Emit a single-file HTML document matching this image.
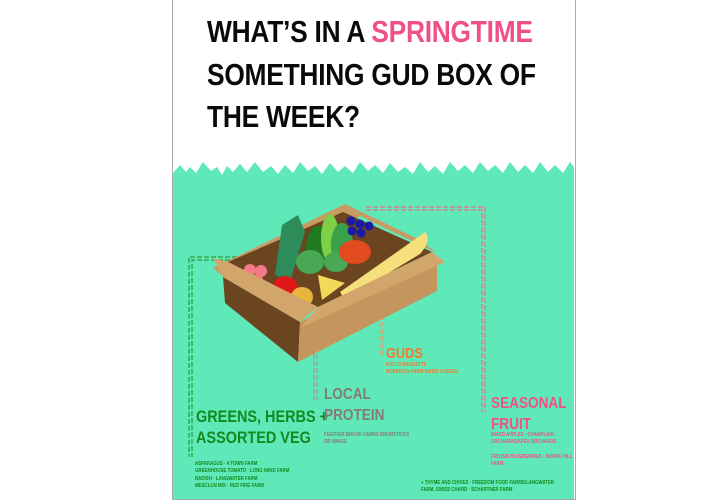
<!DOCTYPE html>
<html><head><meta charset="utf-8"><style>
body{margin:0;width:720px;height:500px;background:#fff;position:relative;overflow:hidden;font-family:"Liberation Sans",sans-serif}
.t{position:absolute;left:207px;font-weight:bold;font-size:31px;color:#0a0a0a;white-space:nowrap;transform:scaleX(0.85);transform-origin:0 0;letter-spacing:-0.3px}
.l{position:absolute;font-weight:bold;white-space:nowrap;transform:scaleX(0.85);transform-origin:0 0}
.s{position:absolute;font-weight:bold;font-size:5.5px;white-space:nowrap;line-height:7.3px;transform:scaleX(0.8);transform-origin:0 0}
</style></head><body>
<div style="position:absolute;left:172px;top:0;width:402px;height:499px;border:1px solid #aaa;border-top:none"></div>
<svg style="position:absolute;left:0;top:0" width="720" height="500">
<polygon fill="#5fe9b9" points="173,173 180,165 186,172 190,167 196,173 203,162 211,171 217,167 222,175 227,166 233,172 240,164 247,172 255,162 263,172 271,166 278,174 285,165 293,173 300,162 308,171 315,166 322,174 330,163 338,172 345,166 353,173 360,162 368,171 375,165 383,173 390,163 398,172 405,167 413,174 420,162 428,172 435,166 443,174 450,162 458,171 465,165 473,173 480,162 488,171 495,165 503,173 510,162 518,172 525,165 533,173 540,162 548,172 555,165 563,173 570,162 574,167 574,499 173,499"/>
<g fill="none" stroke-dasharray="5,2" stroke-width="1.2">
<path d="M258,257 H189 V457 M258,260 H192 V457" stroke="#2a9a3a"/>
<path d="M366,207 H485 V412 M366,210 H482 V412" stroke="#ea6d8e"/>
<path d="M314,312 V400 M317,312 V400" stroke="#9a9a9a"/>
<path d="M380,280 V356 M383,280 V356" stroke="#f09a60"/>
</g>
<polygon fill="#c99b62" points="213,268 345,204 360,216 228,280"/>
<polygon fill="#6b4420" points="228,262 343,212 432,252 318,307"/>
<polygon fill="#c99b62" points="345,204 420,240 437,253 360,216"/>
<polygon fill="#2e8c5a" points="282,225 298,215 305,232 290,282 275,275"/>
<ellipse cx="318" cy="248" rx="12" ry="22" fill="#1f7a20"/>
<ellipse cx="330" cy="238" rx="9" ry="24" fill="#7ccf46"/>
<ellipse cx="342" cy="245" rx="11" ry="22" fill="#3aa04a"/>
<ellipse cx="310" cy="262" rx="14" ry="12" fill="#4aa855"/>
<ellipse cx="336" cy="262" rx="12" ry="10" fill="#4aa855"/>
<g fill="#1a1aa8"><circle cx="351" cy="221" r="4.5"/><circle cx="360" cy="224" r="4.5"/><circle cx="369" cy="226" r="4.5"/><circle cx="352" cy="231" r="4.5"/><circle cx="361" cy="233" r="4.5"/></g>
<ellipse cx="355" cy="252" rx="16" ry="12" fill="#e24a20"/>
<g fill="#f47a8a"><circle cx="250" cy="270" r="6"/><circle cx="261" cy="271" r="6"/><circle cx="257" cy="280" r="6"/></g>
<circle cx="285" cy="289" r="13" fill="#e01818"/>
<ellipse cx="302" cy="297" rx="11" ry="10" fill="#e8b43c"/>
<line x1="283" y1="312" x2="296" y2="301" stroke="#eee" stroke-width="3"/>
<polygon fill="#f3d95a" points="318,275 345,283 322,300"/>
<path d="M340,292 Q400,250 425,232 Q432,240 420,254 Q385,275 345,300 Z" fill="#f6e07e"/>
<polygon fill="#6b4420" points="223,277 300,322 298,362 225,303"/>
<polygon fill="#c5955e" points="300,322 437,255 437,291 298,362"/>
<polygon fill="#d2a56b" points="213,258 228,262 318,307 300,322 223,277"/>
<polygon fill="#d2a56b" points="432,252 445,262 300,328 318,307"/>
</svg>
<div class="t" style="top:14px">WHAT’S IN A <span style="color:#f0508a">SPRINGTIME</span></div>
<div class="t" style="top:57px">SOMETHING GUD BOX OF</div>
<div class="t" style="top:99px">THE WEEK?</div>
<div class="l" style="left:196px;top:406px;font-size:17px;line-height:21px;color:#138a1e">GREENS, HERBS +<br>ASSORTED VEG</div>
<div class="l" style="left:324px;top:384px;font-size:16px;line-height:21px;color:#857a78">LOCAL<br>PROTEIN</div>
<div class="l" style="left:386px;top:345px;font-size:15px;color:#f07a30">GUDS</div>
<div class="l" style="left:491px;top:393px;font-size:16px;line-height:21px;color:#f0508a">SEASONAL<br>FRUIT</div>
<div class="s" style="left:195px;top:461px;color:#138a1e">ASPARAGUS · 4 TOWN FARM<br>GREENHOUSE TOMATO · LONG WIND FARM<br>RADISH · LANGWATER FARM<br>MESCLUN MIX · RED FIRE FARM</div>
<div class="s" style="left:324px;top:432px;color:#857a78">FEATHER BROOK FARMS DRUMSTICKS<br>OR WINGS</div>
<div class="s" style="left:386px;top:362px;color:#f07a30">IGGY’S BAGUETTE<br>ROBINSON FARM SWISS CHEESE</div>
<div class="s" style="left:491px;top:432px;color:#f0508a">MIXED APPLES · CHAMPLAIN<br>ORCHARDS/APEX ORCHARDS<br><br>FROZEN BLUEBERRIES · BURKE HILL<br>FARM</div>
<div class="s" style="left:421px;top:480px;color:#138a1e">+ THYME AND CHIVES · FREEDOM FOOD FARMS/LANGWATER<br>FARM, SWISS CHARD · SCHARTNER FARM</div>
</body></html>
